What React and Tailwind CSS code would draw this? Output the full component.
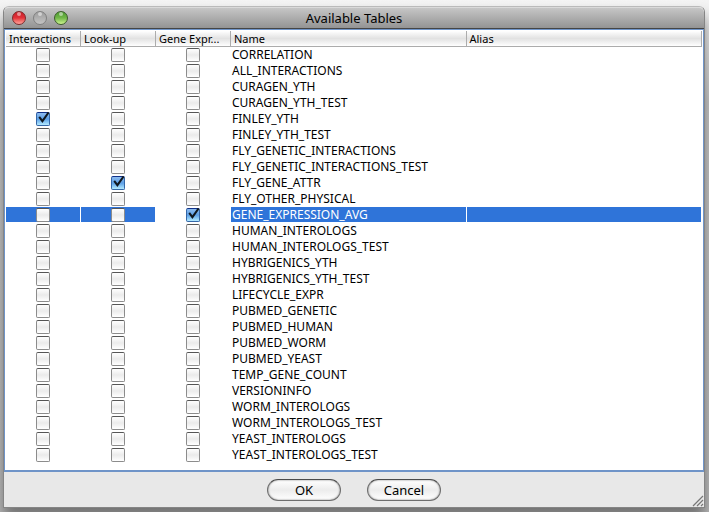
import React, { useState } from "react";

const columns = ["Interactions", "Look-up", "Gene Expr...", "Name", "Alias"];

const kinds = ["Interactions", "Look-up", "Gene Expression"];

const tables = [
  "CORRELATION",
  "ALL_INTERACTIONS",
  "CURAGEN_YTH",
  "CURAGEN_YTH_TEST",
  "FINLEY_YTH",
  "FINLEY_YTH_TEST",
  "FLY_GENETIC_INTERACTIONS",
  "FLY_GENETIC_INTERACTIONS_TEST",
  "FLY_GENE_ATTR",
  "FLY_OTHER_PHYSICAL",
  "GENE_EXPRESSION_AVG",
  "HUMAN_INTEROLOGS",
  "HUMAN_INTEROLOGS_TEST",
  "HYBRIGENICS_YTH",
  "HYBRIGENICS_YTH_TEST",
  "LIFECYCLE_EXPR",
  "PUBMED_GENETIC",
  "PUBMED_HUMAN",
  "PUBMED_WORM",
  "PUBMED_YEAST",
  "TEMP_GENE_COUNT",
  "VERSIONINFO",
  "WORM_INTEROLOGS",
  "WORM_INTEROLOGS_TEST",
  "YEAST_INTEROLOGS",
  "YEAST_INTEROLOGS_TEST",
];

function CheckBox({ label, checked, onChange }) {
  return (
    <span className="relative mx-auto block size-3.5">
      <input
        type="checkbox"
        aria-label={label}
        checked={checked}
        onChange={onChange}
        className="block size-3.5 appearance-none rounded-[2px] border border-[#8c8c8c] border-t-[#555] bg-linear-to-b from-white via-[#ebebeb] to-white checked:border-[#3467a8] checked:border-t-[#10318a] checked:from-[#8dbcf0] checked:via-[#5c9fe6] checked:to-[#b4ebff]"
      />
      {checked && (
        <svg
          viewBox="0 0 14 14"
          className="pointer-events-none absolute inset-0 size-3.5"
          fill="none"
          stroke="#101820"
        >
          <path d="M3.2 4.8 L6.4 9.2 L12.6 0.4" strokeWidth="2" />
        </svg>
      )}
    </span>
  );
}

function Light({ label, color }) {
  return (
    <button
      aria-label={label}
      className={`relative size-3.5 rounded-full border ${color}`}
    >
      <span className="absolute top-0 left-1 h-1 w-1 rounded-full bg-white/50" />
    </button>
  );
}

function PushButton({ children }) {
  return (
    <button className="h-[22px] w-[74px] rounded-full border border-[#6e6e6e] border-t-[#4a4a4a] bg-linear-to-b from-white via-[#ececec] to-white text-[13px] leading-5 shadow-[inset_0_0_2px_#777]">
      {children}
    </button>
  );
}

function App() {
  const [selected, setSelected] = useState(10);
  const [checked, setChecked] = useState({ "4-0": true, "8-1": true, "10-2": true });

  const toggle = (key) => {
    setChecked({ ...checked, [key]: !checked[key] });
  };

  return (
    <div className="flex min-h-screen flex-col overflow-hidden bg-linear-to-b from-[#f4f4f4] via-[#c8c8c8] via-20% to-[#bcbcbc] pt-1.5 pr-1 pb-1 pl-[3px] font-['Noto_Sans','Open_Sans',sans-serif] text-black">
      <div className="flex flex-1 flex-col rounded-t-md border border-[#858585] border-t-[#bababa] bg-[#e8e8e8] shadow-[0_10px_14px_rgba(0,0,0,0.4)]">
        <header className="grid h-[22px] grid-cols-[1fr_auto_1fr] items-center rounded-t-[5px] border-t border-[#dadada] border-b border-b-[#454545] bg-linear-to-b from-[#c6c6c6] to-[#949494] px-2">
          <div className="flex gap-[7px]">
            <Light
              label="Close"
              color="border-[#7d2a2c] bg-linear-to-b from-[#c8202a] via-[#e2323a] to-[#ffa09c]"
            />
            <Light
              label="Minimize"
              color="border-[#808080] bg-linear-to-b from-[#9c9c9c] to-[#c4c4c4]"
            />
            <Light
              label="Zoom"
              color="border-[#3c5c2c] bg-linear-to-b from-[#4d9a30] via-[#71b848] to-[#cdf590]"
            />
          </div>
          <h1 className="text-[13px] leading-5">Available Tables</h1>
        </header>

        <main className="flex-1 border border-b-2 border-[#6f94c8] bg-white px-px pt-px">
          <table className="w-full table-fixed border-separate border-spacing-0 text-left">
            <colgroup>
              <col className="w-[75px]" />
              <col className="w-[75px]" />
              <col className="w-[75px]" />
              <col />
              <col />
            </colgroup>
            <thead>
              <tr>
                {columns.map((name) => (
                  <th
                    key={name}
                    className="h-4 overflow-hidden border-r border-b border-[#acacac] bg-linear-to-b from-white via-[#e2e2e2] to-white p-0 pl-[3px] text-[11px] leading-[15px] font-normal whitespace-nowrap"
                  >
                    {name}
                  </th>
                ))}
              </tr>
            </thead>
            <tbody>
              {tables.map((name, i) => {
                const cell =
                  i === selected
                    ? "h-4 border-r border-b border-white bg-[#2f74d9] bg-clip-padding p-0 text-white"
                    : "h-4 border-r border-b border-white p-0";
                return (
                  <tr key={name} onClick={() => setSelected(i)}>
                    {kinds.map((kind, k) => (
                      <td
                        key={kind}
                        className={k === 2 ? "h-4 border-r border-b border-white p-0" : cell}
                      >
                        <CheckBox
                          label={`${name} ${kind}`}
                          checked={!!checked[`${i}-${k}`]}
                          onChange={() => toggle(`${i}-${k}`)}
                        />
                      </td>
                    ))}
                    <td className={cell}>
                      <span className="block pl-px text-xs leading-[15px]">{name}</span>
                    </td>
                    <td className={cell}></td>
                  </tr>
                );
              })}
            </tbody>
          </table>
        </main>

        <footer className="relative flex h-[35px] items-center justify-center gap-[26px]">
          <PushButton>OK</PushButton>
          <PushButton>Cancel</PushButton>
          <svg
            viewBox="0 0 12 12"
            className="absolute right-0 bottom-0 size-3"
            stroke="#777"
            strokeWidth="1.2"
          >
            <path d="M1 11 L11 1 M5 11 L11 5 M9 11 L11 9" />
          </svg>
        </footer>
      </div>
    </div>
  );
}

export default App;
